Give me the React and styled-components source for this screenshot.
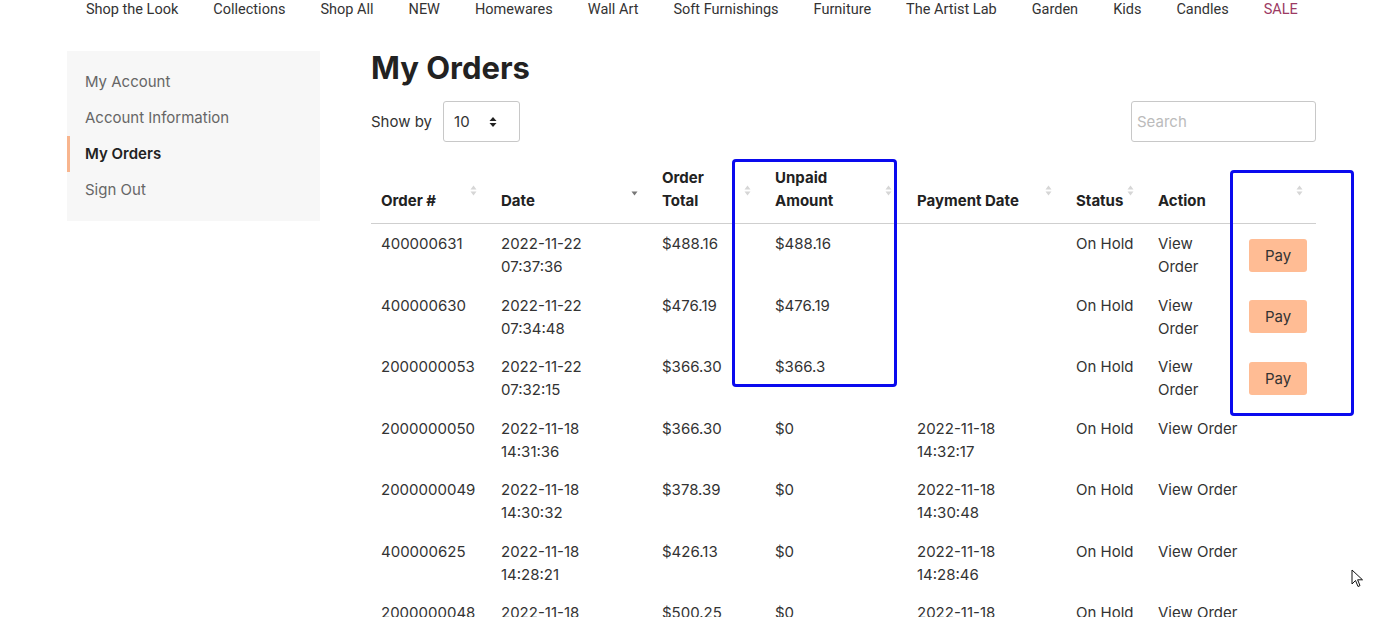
import React from "react";
import styled, { createGlobalStyle } from "styled-components";

const GlobalStyle = createGlobalStyle`
  body {
    margin: 0;
    background: #fff;
    font-family: Inter, "Open Sans", sans-serif;
    color: #333;
  }
`;

const Page = styled.div`
  position: relative;
  width: 1394px;
  height: 617px;
  overflow: hidden;
`;

const TopNav = styled.nav`
  display: flex;
  gap: 35px;
  padding: 1px 0 0 86px;
  height: 17px;
  line-height: 18px;
  font-family: Roboto, "Liberation Sans", sans-serif;
  font-size: 14.5px;
`;

const NavLink = styled.a`
  color: ${p => (p.$sale ? "#9c3a63" : "#333")};
  text-decoration: none;
  white-space: nowrap;
`;

const Layout = styled.div`
  display: flex;
  align-items: flex-start;
  gap: 51px;
  padding: 33px 0 0 67px;
`;

const Sidebar = styled.ul`
  list-style: none;
  margin: 0;
  width: 253px;
  padding: 13px 0 13px;
  background: #f7f7f7;
  flex-shrink: 0;
`;

const SideItem = styled.li`
  height: 36px;
  line-height: 36px;
  padding-left: 15px;
  font-size: 15px;
  color: ${p => (p.$active ? "#222" : "#666")};
  font-weight: ${p => (p.$active ? 600 : 400)};
  border-left: 3px solid ${p => (p.$active ? "#f8b58e" : "transparent")};
`;

const Main = styled.main`
  width: 945px;
`;

const Title = styled.h1`
  margin: 0;
  font-size: 31px;
  line-height: 34px;
  font-weight: 700;
  color: #222;
`;

const Controls = styled.div`
  display: flex;
  justify-content: space-between;
  align-items: center;
  margin-top: 16px;
`;

const ShowBy = styled.label`
  display: flex;
  align-items: center;
  gap: 11px;
  font-size: 15px;
`;

const SelectBox = styled.div`
  display: flex;
  align-items: center;
  justify-content: space-between;
  width: 77px;
  height: 41px;
  box-sizing: border-box;
  padding: 0 22px 0 10px;
  border: 1px solid #c8c8c8;
  border-radius: 3px;
  font-size: 15px;
`;

const SearchInput = styled.input`
  width: 185px;
  height: 41px;
  box-sizing: border-box;
  border: 1px solid #c8c8c8;
  border-radius: 3px;
  padding: 0 5px;
  font-family: inherit;
  font-size: 15px;
  &::placeholder { color: #bbb; }
`;

const Table = styled.table`
  width: 945px;
  margin-top: 16px;
  border-collapse: collapse;
  table-layout: fixed;
`;

const Th = styled.th`
  position: relative;
  text-align: left;
  vertical-align: bottom;
  padding: 8px 10px 11px;
  font-size: 15px;
  line-height: 23px;
  font-weight: 700;
  color: #222;
  border-bottom: 1px solid #cfcfcf;
`;

const SortIcon = styled.svg`
  position: absolute;
  right: ${p => p.$right || 16}px;
  top: 50%;
  transform: translateY(-55%);
`;

const Td = styled.td`
  vertical-align: ${p => (p.$middle ? "middle" : "top")};
  padding: 8px 10px 7.5px;
  font-size: 15px;
  line-height: 23px;
  color: #333;
  white-space: ${p => (p.$nowrap ? "nowrap" : "normal")};
`;

const PayButton = styled.button`
  width: 58px;
  height: 33px;
  border: none;
  border-radius: 3px;
  background: #ffbc94;
  color: #333;
  font-family: inherit;
  font-size: 15px;
  padding: 0;
`;

const Highlight = styled.div`
  position: absolute;
  border: 3px solid #0a0aee;
  border-radius: 4px;
  box-sizing: border-box;
  pointer-events: none;
`;

const Cursor = styled.svg`
  position: absolute;
  left: 1351px;
  top: 569px;
`;

const navItems = [
  "Shop the Look", "Collections", "Shop All", "NEW", "Homewares", "Wall Art",
  "Soft Furnishings", "Furniture", "The Artist Lab", "Garden", "Kids", "Candles",
];

const orders = [
  { id: "400000631", date: ["2022-11-22", "07:37:36"], total: "$488.16", unpaid: "$488.16", paid: null, pay: true },
  { id: "400000630", date: ["2022-11-22", "07:34:48"], total: "$476.19", unpaid: "$476.19", paid: null, pay: true },
  { id: "2000000053", date: ["2022-11-22", "07:32:15"], total: "$366.30", unpaid: "$366.3", paid: null, pay: true },
  { id: "2000000050", date: ["2022-11-18", "14:31:36"], total: "$366.30", unpaid: "$0", paid: ["2022-11-18", "14:32:17"] },
  { id: "2000000049", date: ["2022-11-18", "14:30:32"], total: "$378.39", unpaid: "$0", paid: ["2022-11-18", "14:30:48"] },
  { id: "400000625", date: ["2022-11-18", "14:28:21"], total: "$426.13", unpaid: "$0", paid: ["2022-11-18", "14:28:46"] },
  { id: "2000000048", date: ["2022-11-18", "14:27:02"], total: "$500.25", unpaid: "$0", paid: ["2022-11-18", "14:27:30"] },
];

const Sort = ({ right, only }) => (
  <SortIcon $right={right} width="7" height="12" viewBox="0 0 7 12">
    {only !== "down" && <path d="M3.5 1 L6.5 5 L0.5 5 Z" fill="#d6d6d6" />}
    <path d="M3.5 11 L6.5 7 L0.5 7 Z" fill={only === "down" ? "#777" : "#d6d6d6"} />
  </SortIcon>
);

export default function App() {
  return (
    <Page>
      <GlobalStyle />
      <TopNav>
        {navItems.map(n => <NavLink key={n}>{n}</NavLink>)}
        <NavLink $sale>SALE</NavLink>
      </TopNav>
      <Layout>
        <Sidebar>
          <SideItem>My Account</SideItem>
          <SideItem>Account Information</SideItem>
          <SideItem $active>My Orders</SideItem>
          <SideItem>Sign Out</SideItem>
        </Sidebar>
        <Main>
          <Title>My Orders</Title>
          <Controls>
            <ShowBy>
              Show by
              <SelectBox>
                <span>10</span>
                <svg width="8" height="12" viewBox="0 0 8 12">
                  <path d="M4 1 L7.5 5 L0.5 5 Z M4 11 L7.5 7 L0.5 7 Z" fill="#222" />
                </svg>
              </SelectBox>
            </ShowBy>
            <SearchInput placeholder="Search" />
          </Controls>
          <Table>
            <colgroup>
              <col style={{ width: 120 }} />
              <col style={{ width: 161 }} />
              <col style={{ width: 113 }} />
              <col style={{ width: 142 }} />
              <col style={{ width: 159 }} />
              <col style={{ width: 82 }} />
              <col style={{ width: 91 }} />
              <col style={{ width: 77 }} />
            </colgroup>
            <thead>
              <tr>
                <Th>Order #<Sort right={14} /></Th>
                <Th>Date<Sort right={14} only="down" /></Th>
                <Th>Order<br />Total<Sort right={14} /></Th>
                <Th>Unpaid<br />Amount<Sort right={15} /></Th>
                <Th>Payment Date<Sort right={14} /></Th>
                <Th>Status<Sort right={14} /></Th>
                <Th>Action</Th>
                <Th><Sort right={13} /></Th>
              </tr>
            </thead>
            <tbody>
              {orders.map(o => (
                <tr key={o.id}>
                  <Td>{o.id}</Td>
                  <Td>{o.date[0]}<br />{o.date[1]}</Td>
                  <Td>{o.total}</Td>
                  <Td>{o.unpaid}</Td>
                  <Td>{o.paid && <>{o.paid[0]}<br />{o.paid[1]}</>}</Td>
                  <Td>On Hold</Td>
                  <Td $nowrap={!o.pay}>
                    {o.pay ? <>View<br />Order</> : "View Order"}
                  </Td>
                  <Td $middle>{o.pay && <PayButton>Pay</PayButton>}</Td>
                </tr>
              ))}
            </tbody>
          </Table>
        </Main>
      </Layout>
      <Highlight style={{ left: 732, top: 159, width: 165, height: 228 }} />
      <Highlight style={{ left: 1230, top: 170, width: 124, height: 246 }} />
      <Cursor width="13" height="20" viewBox="0 0 13 20">
        <path d="M1 1 L1 15 L4.5 11.5 L7 17.5 L9 16.6 L6.6 10.8 L11.5 10.8 Z" fill="#fff" stroke="#111" strokeWidth="1" strokeLinejoin="round" />
      </Cursor>
    </Page>
  );
}
